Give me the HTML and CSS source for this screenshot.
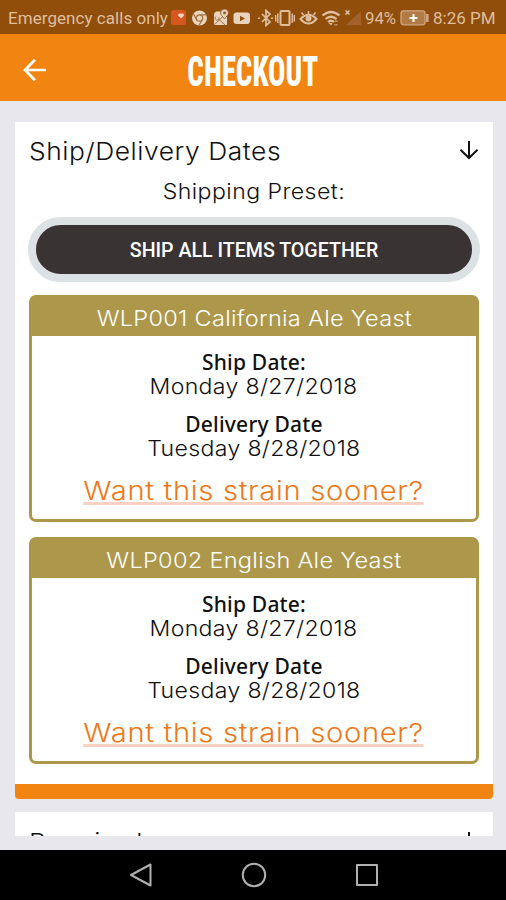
FILE: index.html
```
<!DOCTYPE html>
<html lang="en">
<head>
<meta charset="utf-8">
<title>Checkout</title>
<link rel="stylesheet" href="styles.css">
</head>
<body>
<div class="status">
  <span class="carrier">Emergency calls only</span>
  <svg class="notifications" width="84" height="18" viewBox="0 0 84 18">
    <rect x="0" y="1" width="15" height="15" rx="2.500" fill="#d4571f"/>
    <path d="M10 9.500 7.300 6.800a1.500 1.500 0 0 1 2.700-1.600 1.500 1.500 0 0 1 2.700 1.600z" fill="#f4d8c4"/>
    <circle cx="28.500" cy="9" r="7.500" fill="#ead3bd"/>
    <circle cx="28.500" cy="9" r="3.200" fill="#ead3bd" stroke="#a87545" stroke-width="1.300"/>
    <path d="M28.500 5.800h6.500M25.700 10.600 22.500 5M31.300 10.600 28 16.300" stroke="#a87545" stroke-width="1.200"/>
    <path d="M45 2.500h8l3 5V16H43V4.500z" fill="#ead3bd"/>
    <path d="m43.500 15.500 9-8.500M48 10.500l6 5.500M45 7.500a2 2 0 1 0 3 1" stroke="#a87545" fill="none"/>
    <path d="M53.500 10c-2-3-4-4-4-6a4 4 0 0 1 8 0c0 2-2 3-4 6z" fill="#ead3bd" stroke="#96581c" stroke-width=".8"/>
    <circle cx="53.500" cy="4" r="1.400" fill="#96581c"/>
    <rect x="62.500" y="3.500" width="16.500" height="11.500" rx="3" fill="#ead3bd"/>
    <path d="m69 6.800 5 2.700-5 2.700z" fill="#924f0b"/>
  </svg>
  <svg class="system" width="108" height="18" viewBox="0 0 108 18" fill="none" stroke="#dfbf9f">
    <path d="m6 5 8 8-4 3.500v-15L14 5l-8 8" stroke-width="1.700"/>
    <path d="M2 8.500h2v1.500H2zM15 8.500h2v1.500h-2z" fill="#dfbf9f" stroke="none"/>
    <rect x="24.500" y="2" width="9" height="14" rx="1" stroke-width="2"/>
    <path d="M21.800 4.500v9.500M36.200 4.500v9.500M19.700 6v6.500M38.300 6v6.500" stroke-width="1.400"/>
    <path d="M44.500 10q8-8.500 16 0-8 9-16 0z" stroke-width="2"/>
    <circle cx="52.500" cy="9.500" r="3" fill="#dfbf9f" stroke="none"/>
    <path d="M52.500 5V2M47.500 6l-2-2.500M57.500 6l2-2.500" stroke-width="1.500"/>
    <path d="M66.500 6.500q8.500-7 17 0M69.500 10q5.500-4.500 11 0M72 13q3-2.500 6 0" stroke-width="2.200"/>
    <path d="M72.500 14h4L75 16.500z" fill="#dfbf9f" stroke="none"/>
    <path d="m78.500 13 1.500-1.500 1.500 1.500M78.500 15l1.500 1.500 1.500-1.500" stroke-width="1"/>
    <path d="m89.500 1.500 4 4m0-4-4 4" stroke-width="1.600"/>
    <path d="M105 2v14H90z" fill="#a3622a" stroke="none"/>
  </svg>
  <span class="percent">94%</span>
  <svg class="battery" width="31" height="18" viewBox="0 0 31 18">
    <rect x="1" y="1.800" width="24" height="14" rx="2.500" fill="#b27a45" stroke="#d0a681" stroke-width="1.300"/>
    <path d="M27.300 5v8" stroke="#d0a681" stroke-width="2.600"/>
    <path d="M13.500 5v8M9.500 9h8" stroke="#fff" stroke-width="2"/>
  </svg>
  <span class="clock">8:26 PM</span>
</div>
<header class="appbar">
  <svg class="back" width="24" height="24" viewBox="0 0 24 24"><path d="M12 1.800 2 12l10 10.200M2 12h21" fill="none" stroke="#fff" stroke-width="2.700"/></svg>
  <h1 class="screen-title"><span>CHECKOUT</span></h1>
</header>
<main class="content">
  <section class="panel">
    <div class="panel-head">
      <h2>Ship/Delivery Dates</h2>
      <svg class="down" width="20" height="20" viewBox="0 0 20 20"><path d="M10 1v17M1.500 9.800 10 18l8.500-8.200" fill="none" stroke="#111" stroke-width="2"/></svg>
    </div>
    <p class="preset"><span>Shipping Preset:</span></p>
    <button class="ship-button">SHIP ALL ITEMS TOGETHER</button>
    <article class="item">
      <h3><span>WLP001 California Ale Yeast</span></h3>
      <div class="dates">
        <div class="label">Ship Date:</div>
        <div class="value"><span>Monday 8/27/2018</span></div>
        <div class="label second">Delivery Date</div>
        <div class="value"><span>Tuesday 8/28/2018</span></div>
        <a class="sooner"><span>Want this strain sooner?</span></a>
      </div>
    </article>
    <article class="item">
      <h3><span>WLP002 English Ale Yeast</span></h3>
      <div class="dates">
        <div class="label">Ship Date:</div>
        <div class="value"><span>Monday 8/27/2018</span></div>
        <div class="label second">Delivery Date</div>
        <div class="value"><span>Tuesday 8/28/2018</span></div>
        <a class="sooner"><span>Want this strain sooner?</span></a>
      </div>
    </article>
  </section>
  <section class="panel next">
    <div class="panel-head">
      <h2>Required</h2>
      <svg class="down" width="20" height="20" viewBox="0 0 20 20"><path d="M10 1v17M1.500 9.800 10 18l8.500-8.200" fill="none" stroke="#111" stroke-width="2"/></svg>
    </div>
  </section>
</main>
<nav class="navbar">
  <svg width="24" height="26" viewBox="0 0 24 26"><path d="M21.500 2.500v21L2 13z"/></svg>
  <svg width="26" height="26" viewBox="0 0 26 26"><circle cx="13" cy="13" r="11.200"/></svg>
  <svg width="24" height="26" viewBox="0 0 24 26"><rect x="2" y="3" width="20" height="20"/></svg>
</nav>
</body>
</html>
```
FILE: styles.css
```
* { box-sizing: border-box; }
body {
  margin: 0;
  width: 506px;
  height: 900px;
  overflow: hidden;
  display: flex;
  flex-direction: column;
  background: #e8e7ed;
  color: #111;
  font-family: Inter, "Liberation Sans", sans-serif;
}
h1, h2, h3, p { margin: 0; font-weight: 400; }

.status {
  flex: none;
  height: 34px;
  display: flex;
  align-items: center;
  padding: 2px 0 0 8px;
  background: #904e0a;
  color: #dfbf9f;
  font: 17px/32px Roboto, sans-serif;
  white-space: nowrap;
}
.status svg { flex: none; }
.carrier { width: 163px; letter-spacing: 0.050px; }
.notifications { margin-right: 1px; }
.percent { width: 35px; font-size: 16.800px; margin-left: 1px; }
.clock { margin-left: 2px; }

.appbar {
  flex: none;
  height: 67px;
  display: grid;
  grid-template-columns: 57px 1fr 57px;
  align-items: center;
  background: #f28411;
  color: #fff;
}
.back { margin: 4px 0 0 22.500px; }
.screen-title {
  height: 67px;
  padding-top: 7px;
  font: 800 42px/61px "Roboto Condensed", Roboto, sans-serif;
  text-align: center;
}
.screen-title span { display: inline-block; transform: scaleX(0.690); }

.content {
  flex: none;
  height: 714px;
  margin: 21px 13px 14px 15px;
  overflow: hidden;
}
.panel {
  height: 677px;
  padding: 15px 14px 0;
  background: #fff;
  border-bottom: 15px solid #f28411;
  border-radius: 0 0 4px 4px;
}
.next { margin-top: 13px; padding-top: 16px; }
.panel-head {
  height: 28px;
  display: flex;
  justify-content: space-between;
  align-items: center;
}
h2 {
  padding-top: 2px;
  font-size: 24px;
  font-weight: 350;
  line-height: 28px;
  letter-spacing: 0.500px;
  transform: scaleX(1.100);
  transform-origin: left;
}
.down { margin: -2px 0 0; }
.preset {
  margin-top: 14px;
  text-align: center;
  font-size: 21px;
  font-weight: 350;
  line-height: 26px;
  letter-spacing: 0.400px;
}
.preset span { display: inline-block; transform: scaleX(1.100); }
.ship-button {
  display: block;
  width: 452px;
  height: 65px;
  margin: 12px -1px 13px;
  padding: 3px 0 0;
  border: 8px solid #dce1e4;
  border-radius: 33px;
  background: #393333;
  color: #fff;
  font: 500 19.600px/46px Roboto, sans-serif;
}
.item {
  height: 227px;
  margin-bottom: 15px;
  border: 3px solid #ad974b;
  border-radius: 7px;
  text-align: center;
}
h3 {
  height: 38px;
  padding-top: 1px;
  background: #ad974b;
  color: #fff;
  font-size: 22px;
  font-weight: 350;
  line-height: 38px;
  letter-spacing: 0.280px;
}
h3 span { display: inline-block; transform: scaleX(1.070); }
.dates { padding-top: 14px; }
.label {
  font: 500 21px/25px "Noto Sans", sans-serif;
  letter-spacing: 0.200px;
}
.second { margin-top: 12px; }
.value {
  margin-top: -1px;
  padding-top: 1px;
  font-size: 21px;
  font-weight: 300;
  line-height: 24px;
  letter-spacing: 0.300px;
}
.value span { display: inline-block; transform: scaleX(1.100); }
.second { margin-top: 13px; }
.sooner {
  display: block;
  margin-top: 13px;
  color: #ee7817;
  font-size: 26px;
  font-weight: 300;
  line-height: 34px;
  letter-spacing: 0.600px;
}
.sooner span {
  display: inline-block;
  height: 31px;
  border-bottom: 3px solid #f9d0c2;
  transform: scaleX(1.123);
}

.navbar {
  flex: none;
  height: 50px;
  display: flex;
  justify-content: center;
  align-items: center;
  gap: 88px;
  padding-left: 2px;
  background: #000;
}
.navbar svg { fill: none; stroke: #b0b0b0; stroke-width: 2; stroke-linejoin: round; }
```
